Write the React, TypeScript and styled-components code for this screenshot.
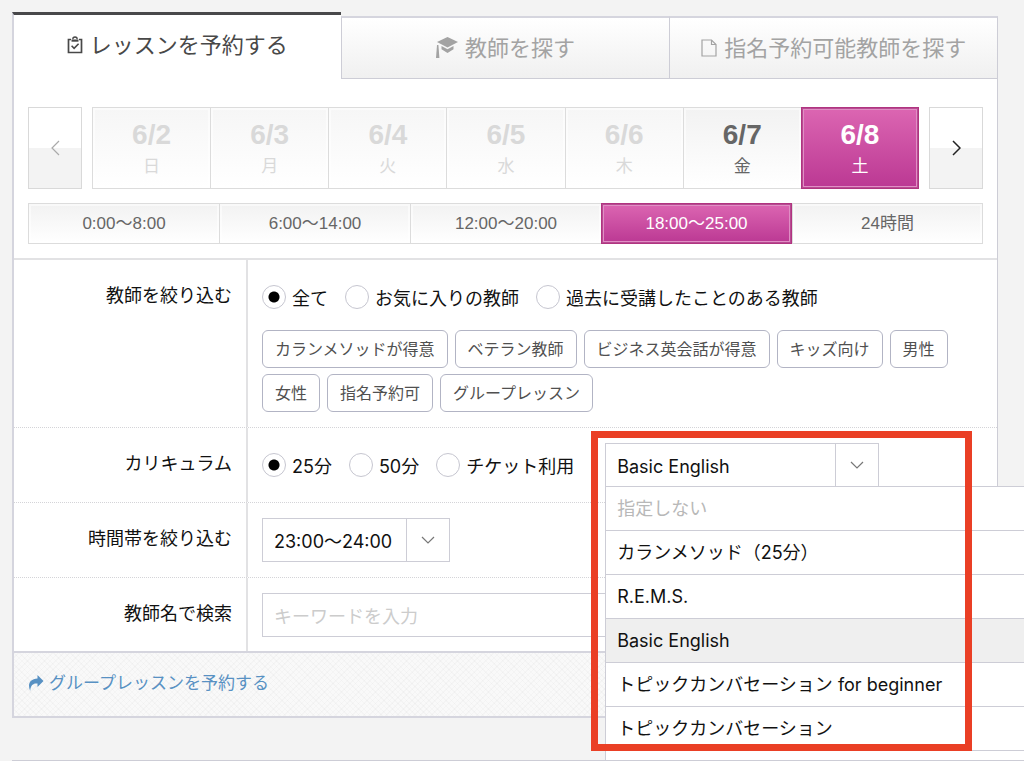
import React, { useState } from "react";
import styled, { createGlobalStyle, css } from "styled-components";

const line = "#cdcdd6";
const softLine = "#e2e2e4";

const GlobalStyle = createGlobalStyle`
  *, *::before, *::after { box-sizing: border-box; }
  body {
    margin: 0;
    background: #f3f3f3;
    color: #111;
    font-family: "Inter", "Noto Sans CJK JP", sans-serif;
    font-size: 18px;
    line-height: 24px;
  }
  button, input, select { font: inherit; color: inherit; margin: 0; }
`;

const Page = styled.div`
  min-height: 100vh;
  overflow: hidden;
  padding: 12px 26px 0 12px;
`;

const Tabs = styled.nav`
  display: grid;
  grid-template-columns: repeat(3, 1fr);
  align-items: end;
`;

const Tab = styled.a<{ $active?: boolean }>`
  display: flex;
  align-items: center;
  justify-content: center;
  gap: 7px;
  height: 63px;
  font-size: 22px;
  line-height: 32px;
  text-decoration: none;
  color: #a3a3a3;
  background: linear-gradient(#fff, #f0f0f0);
  border-top: 2px solid #d5d5de;
  border-left: 1px solid ${line};
  border-bottom: 1px solid ${line};

  &:last-child { border-right: 1px solid ${line}; }

  ${(p) =>
    p.$active &&
    css`
      height: 67px;
      padding-bottom: 4px;
      color: #484848;
      background: #fff;
      border-top: 3px solid #48484a;
      border-left: 2px solid #d5d5de;
      border-bottom: 0;
    `}
`;

const Panel = styled.form`
  margin: 0;
  background: #fff;
  border-left: 2px solid #d5d5de;
  border-right: 1px solid ${line};
`;

const Schedule = styled.div`
  display: grid;
  gap: 14px;
  padding: 28px 14px 14px;
  border-bottom: 2px solid ${softLine};
  font-family: "Liberation Sans", "Noto Sans CJK JP", sans-serif;
`;

const Days = styled.div`
  display: grid;
  grid-template-columns: 54px 1fr 54px;
  gap: 10px;
  height: 82px;
`;

const Segments = styled.div`
  display: grid;
  grid-auto-flow: column;
  grid-auto-columns: 1fr;
`;

const Segment = styled.button<{ $active?: boolean; $from?: string }>`
  display: flex;
  flex-direction: column;
  align-items: center;
  justify-content: center;
  gap: 3px;
  min-height: 41px;
  padding: 0;
  border: 1px solid #dcdcdc;
  border-right-width: 0;
  background: linear-gradient(${(p) => p.$from ?? "#f2f2f2"}, #fff);
  box-shadow: inset 0 0 0 2px rgba(255, 255, 255, 0.5);
  color: #666;
  font-size: 17px;
  line-height: 24px;

  &:last-child { border-right-width: 1px; }
  &:disabled { color: #d9d9d9; }

  ${(p) =>
    p.$active &&
    css`
      border: 1px solid #b03480;
      background: linear-gradient(#dc66b2, #bb3893);
      box-shadow: inset 0 0 0 1px #b84a92, inset 0 0 0 2px #e08fc4;
      color: #fff;
    `}
`;

const DayNumber = styled.strong`
  font-size: 28px;
  line-height: 34px;
`;

const StepButton = styled.button`
  display: grid;
  place-items: center;
  padding: 0;
  border: 1px solid #d9d9d9;
  background: linear-gradient(#fff 50%, #f3f3f3 50%);
  color: #222;

  &:disabled { color: #aaa; }
`;

const Row = styled.div`
  display: grid;
  grid-template-columns: 234px 1fr;
  border-bottom: 1px dotted #d4d4d8;

  &:last-child { border-bottom: 0; }
`;

const RowLabel = styled.label`
  padding: 24px 14px 20px 0;
  border-right: 2px solid ${softLine};
  text-align: right;
`;

const RowBody = styled.div`
  min-width: 0;
  padding: 15px 14px;

  ${Row}:last-child & { padding-bottom: 14px; }
`;

const ControlLine = styled.div`
  display: flex;
  align-items: center;
  gap: 17px;
  height: 44px;
`;

const RadioLabel = styled.label`
  display: flex;
  align-items: center;
  gap: 6px;
  white-space: nowrap;
`;

const RadioText = styled.span`
  padding-top: 3px;
`;

const Radio = styled.input.attrs({ type: "radio" })`
  appearance: none;
  flex: none;
  width: 24px;
  height: 24px;
  border: 1px solid #c6c6d0;
  border-radius: 50%;
  background: #fff;

  &:checked { background: radial-gradient(circle, #000 5px, #fff 6px); }
`;

const Chips = styled.div`
  display: flex;
  flex-wrap: wrap;
  gap: 6px 7px;
  margin-top: 11px;
`;

const Chip = styled.button`
  height: 38px;
  padding: 0 12px;
  border: 1px solid #b2b4c4;
  border-radius: 6px;
  background: #fff;
  color: #505050;
  font-size: 16px;
  line-height: 24px;
`;

const SelectBox = styled.div<{ $width: number }>`
  position: relative;
  width: ${(p) => p.$width}px;
  height: 44px;
`;

const CurriculumBox = styled(SelectBox)`
  margin-left: 14px;
`;

const Select = styled.select`
  appearance: none;
  width: 100%;
  height: 100%;
  padding: 3px 44px 0 11px;
  border: 1px solid ${line};
  border-radius: 0;
  background: #fff;
`;

const Arrow = styled.span`
  position: absolute;
  top: 0;
  right: 0;
  display: grid;
  place-items: center;
  width: 44px;
  height: 100%;
  border: 1px solid ${line};
  color: #777;
  pointer-events: none;
`;

const Menu = styled.ul`
  position: absolute;
  z-index: 1;
  top: 43px;
  left: 0;
  width: 480px;
  margin: 0;
  padding: 0 0 9px;
  list-style: none;
  background: #fff;
  border: 1px solid ${line};
`;

const MenuItem = styled.li<{ $selected?: boolean; $muted?: boolean }>`
  height: 44px;
  padding: 0 11px;
  border-bottom: 1px solid ${line};
  line-height: 43px;
  color: ${(p) => (p.$muted ? "#b8b8b8" : "inherit")};
  background: ${(p) => (p.$selected ? "#efefef" : "#fff")};
`;

const Highlight = styled.div`
  position: absolute;
  z-index: 2;
  top: -12px;
  left: -14px;
  width: 381px;
  height: 320px;
  border: 7px solid #ea3f25;
  pointer-events: none;
`;

const Keyword = styled.input`
  display: block;
  width: 100%;
  height: 44px;
  padding: 2px 12px 0 11px;
  border: 1px solid ${line};
  border-radius: 0;
  background: #fff;

  &::placeholder { color: #ccc; opacity: 1; }
`;

const Footer = styled.footer`
  padding: 18px 14px 21px;
  border: 2px solid #d5d5de;
  border-right: 1px solid ${line};
  background:
    repeating-linear-gradient(45deg, rgba(0, 0, 0, 0.018) 0 1px, transparent 1px 4px),
    repeating-linear-gradient(-45deg, rgba(0, 0, 0, 0.018) 0 1px, transparent 1px 4px),
    #f9f9f9;
`;

const FooterLink = styled.a`
  display: inline-flex;
  align-items: center;
  gap: 5px;
  color: #5891c3;
  font-size: 17px;
  text-decoration: none;
  vertical-align: top;
`;

const NextPanel = styled.section`
  margin-top: 42px;
  border-top: 1px solid ${line};
`;

const ClipboardIcon = () => (
  <svg width="16" height="18" viewBox="0 0 16 18" fill="none" stroke="currentColor" strokeWidth="1.7" aria-hidden="true">
    <path d="M4 3.500H1.500v13h13v-13H12" />
    <path d="M4.500 4.600h7" strokeWidth="2.2" />
    <path d="M5.800 3.200a2.200 2.200 0 0 1 4.400 0" strokeWidth="1.3" />
    <path d="M4.600 9.800l2.500 2.500 4.500-4.600" strokeWidth="1.6" />
  </svg>
);

const CapIcon = () => (
  <svg width="22" height="22" viewBox="0 0 22 22" fill="currentColor" aria-hidden="true">
    <path d="M11.500 0 22 5 11.500 10.500 1 5z" />
    <path d="M5.500 9 11.500 12.200 17.500 9v3.200L11.500 16 5.500 12.200z" />
    <path d="M1 8h1.400L3.400 21H0z" />
  </svg>
);

const PageIcon = () => (
  <svg width="16" height="18" viewBox="0 0 16 18" fill="none" stroke="currentColor" strokeWidth="1.2" aria-hidden="true">
    <path d="M1 1h9.500L15 5.500V17H1z" />
    <path d="M10.500 1v4.500H15" />
  </svg>
);

const ForwardIcon = () => (
  <svg width="16" height="16" viewBox="0 0 16 16" fill="currentColor" aria-hidden="true">
    <path d="M9.500 0 15.500 6 9.500 12V8.500C5 8.300 2.600 10 2.200 16-.6 9.500 1.400 4 9.500 3.500z" />
  </svg>
);

const Chevron = ({ d, w, h, s }: { d: string; w: number; h: number; s: number }) => (
  <svg width={w} height={h} viewBox={`0 0 ${w} ${h}`} fill="none" stroke="currentColor" strokeWidth={s} aria-hidden="true">
    <path d={d} />
  </svg>
);

const DownChevron = () => <Chevron w={14} h={8} s={1.2} d="M1 1l6 6 6-6" />;

const days = [
  ["6/2", "日"],
  ["6/3", "月"],
  ["6/4", "火"],
  ["6/5", "水"],
  ["6/6", "木"],
  ["6/7", "金"],
  ["6/8", "土"],
];
const times = ["0:00〜8:00", "6:00〜14:00", "12:00〜20:00", "18:00〜25:00", "24時間"];
const teacherFilters = ["全て", "お気に入りの教師", "過去に受講したことのある教師"];
const tags = [
  "カランメソッドが得意",
  "ベテラン教師",
  "ビジネス英会話が得意",
  "キッズ向け",
  "男性",
  "女性",
  "指名予約可",
  "グループレッスン",
];
const lengths = ["25分", "50分", "チケット利用"];
const curricula = [
  "指定しない",
  "カランメソッド（25分）",
  "R.E.M.S.",
  "Basic English",
  "トピックカンバセーション for beginner",
  "トピックカンバセーション",
];

function RadioGroup({ name, options }: { name: string; options: string[] }) {
  return (
    <>
      {options.map((option, i) => (
        <RadioLabel key={option}>
          <Radio name={name} defaultChecked={i === 0} />
          <RadioText>{option}</RadioText>
        </RadioLabel>
      ))}
    </>
  );
}

export default function App() {
  const [day, setDay] = useState("6/8");
  const [time, setTime] = useState("18:00〜25:00");
  const [curriculum, setCurriculum] = useState("Basic English");

  return (
    <>
      <GlobalStyle />
      <Page>
        <Tabs>
          <Tab href="#reserve" $active>
            <ClipboardIcon />
            レッスンを予約する
          </Tab>
          <Tab href="#teachers">
            <CapIcon />
            教師を探す
          </Tab>
          <Tab href="#nominate">
            <PageIcon />
            指名予約可能教師を探す
          </Tab>
        </Tabs>

        <Panel>
          <Schedule>
            <Days>
              <StepButton type="button" disabled aria-label="前の週">
                <Chevron w={9} h={16} s={1.2} d="M8 1 1 8l7 7" />
              </StepButton>
              <Segments>
                {days.map(([date, weekday], i) => (
                  <Segment
                    key={date}
                    type="button"
                    disabled={i < 5}
                    $active={date === day}
                    $from={i < 5 ? "#f6f6f6" : undefined}
                    onClick={() => setDay(date)}
                  >
                    <DayNumber>{date}</DayNumber>
                    {weekday}
                  </Segment>
                ))}
              </Segments>
              <StepButton type="button" aria-label="次の週">
                <Chevron w={9} h={16} s={1.5} d="M1 1l7 7-7 7" />
              </StepButton>
            </Days>
            <Segments>
              {times.map((t) => (
                <Segment key={t} type="button" $active={t === time} onClick={() => setTime(t)}>
                  {t}
                </Segment>
              ))}
            </Segments>
          </Schedule>

          <div>
            <Row>
              <RowLabel as="div">教師を絞り込む</RowLabel>
              <RowBody>
                <ControlLine>
                  <RadioGroup name="teacher" options={teacherFilters} />
                </ControlLine>
                <Chips>
                  {tags.map((tag) => (
                    <Chip key={tag} type="button">
                      {tag}
                    </Chip>
                  ))}
                </Chips>
              </RowBody>
            </Row>
            <Row>
              <RowLabel htmlFor="curriculum">カリキュラム</RowLabel>
              <RowBody>
                <ControlLine>
                  <RadioGroup name="length" options={lengths} />
                  <CurriculumBox $width={274}>
                    <Select id="curriculum" value={curriculum} onChange={(e) => setCurriculum(e.target.value)}>
                      {curricula.map((c) => (
                        <option key={c}>{c}</option>
                      ))}
                    </Select>
                    <Arrow>
                      <DownChevron />
                    </Arrow>
                    <Menu role="listbox" aria-label="カリキュラム">
                      {curricula.map((c, i) => (
                        <MenuItem
                          key={c}
                          role="option"
                          aria-selected={c === curriculum}
                          $selected={c === curriculum}
                          $muted={i === 0}
                          onClick={() => setCurriculum(c)}
                        >
                          {c}
                        </MenuItem>
                      ))}
                    </Menu>
                    <Highlight />
                  </CurriculumBox>
                </ControlLine>
              </RowBody>
            </Row>
            <Row>
              <RowLabel htmlFor="hours">時間帯を絞り込む</RowLabel>
              <RowBody>
                <SelectBox $width={188}>
                  <Select id="hours">
                    <option>23:00〜24:00</option>
                  </Select>
                  <Arrow>
                    <DownChevron />
                  </Arrow>
                </SelectBox>
              </RowBody>
            </Row>
            <Row>
              <RowLabel htmlFor="keyword">教師名で検索</RowLabel>
              <RowBody>
                <Keyword id="keyword" type="text" placeholder="キーワードを入力" />
              </RowBody>
            </Row>
          </div>
        </Panel>
        <Footer>
          <FooterLink href="#group">
            <ForwardIcon />
            グループレッスンを予約する
          </FooterLink>
        </Footer>
        <NextPanel />
      </Page>
    </>
  );
}
